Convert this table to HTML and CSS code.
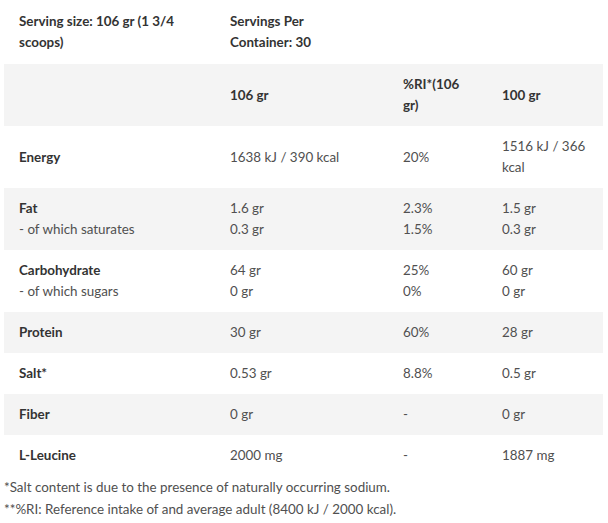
FILE: index.html
```html
<!DOCTYPE html>
<html>
<head>
<meta charset="utf-8">
<link rel="stylesheet" href="styles.css">
</head>
<body>
<table class="nt">
  <colgroup>
    <col class="c1"><col class="c2"><col class="c3"><col class="c4">
  </colgroup>
  <tr class="top">
    <td class="b">Serving size: 106 gr (1 3/4 scoops)</td>
    <td class="b">Servings Per Container: 30</td>
    <td></td>
    <td></td>
  </tr>
  <tr class="alt">
    <td></td>
    <td class="b">106 gr</td>
    <td class="b">%RI*(106 gr)</td>
    <td class="b">100 gr</td>
  </tr>
  <tr>
    <td class="b">Energy</td>
    <td>1638 kJ / 390 kcal</td>
    <td>20%</td>
    <td>1516 kJ / 366 kcal</td>
  </tr>
  <tr class="alt">
    <td><span class="b">Fat</span><br>- of which saturates</td>
    <td>1.6 gr<br>0.3 gr</td>
    <td>2.3%<br>1.5%</td>
    <td>1.5 gr<br>0.3 gr</td>
  </tr>
  <tr>
    <td><span class="b">Carbohydrate</span><br>- of which sugars</td>
    <td>64 gr<br>0 gr</td>
    <td>25%<br>0%</td>
    <td>60 gr<br>0 gr</td>
  </tr>
  <tr class="alt">
    <td class="b">Protein</td>
    <td>30 gr</td>
    <td>60%</td>
    <td>28 gr</td>
  </tr>
  <tr>
    <td class="b">Salt*</td>
    <td>0.53 gr</td>
    <td>8.8%</td>
    <td>0.5 gr</td>
  </tr>
  <tr class="alt">
    <td class="b">Fiber</td>
    <td>0 gr</td>
    <td>-</td>
    <td>0 gr</td>
  </tr>
  <tr>
    <td class="b">L-Leucine</td>
    <td>2000 mg</td>
    <td>-</td>
    <td>1887 mg</td>
  </tr>
</table>
<p class="note">*Salt content is due to the presence of naturally occurring sodium.<br>**%RI: Reference intake of and average adult (8400 kJ / 2000 kcal).</p>
</body>
</html>
```
FILE: styles.css
```css
html, body {
  margin: 0;
  background: #fff;
}
body {
  padding: 0 5px 0 4px;
  font-family: "Lato", "Open Sans", sans-serif;
  font-size: 13.4px;
  line-height: 21px;
  color: #505050;
}
.nt {
  width: 599px;
  border-collapse: collapse;
  table-layout: fixed;
}
.c1 { width: 211px; }
.c2 { width: 173px; }
.c3 { width: 99px; }
.c4 { width: 116px; }
.nt td {
  padding: 10px 12px 10px 15px;
  vertical-align: middle;
  text-align: left;
}
.nt td:nth-child(2) {
  padding-right: 25px;
}
.nt td:nth-child(1) {
  padding-right: 24px;
}
.nt .top td {
  padding-top: 11px;
  padding-bottom: 11px;
}
.alt td {
  background: #f4f4f4;
}
.b {
  font-weight: 700;
  color: #333;
}
.note {
  margin: 0;
  line-height: 22px;
}
```
